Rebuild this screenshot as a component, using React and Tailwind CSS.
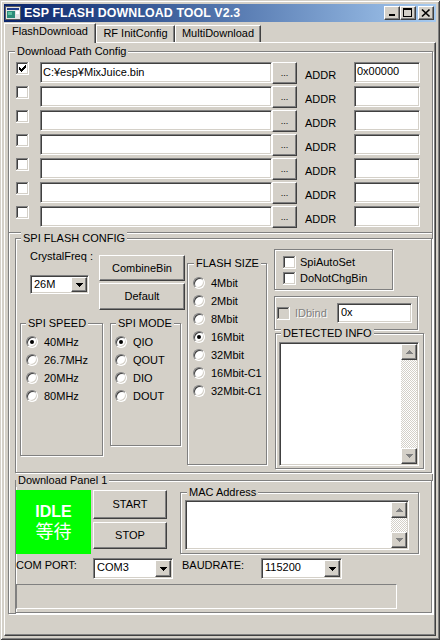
// Classic Win2000-style flash tool dialog, laid out at fixed pixel sizes.
const sunk =
  "border border-t-[#808080] border-l-[#808080] border-r-white border-b-white shadow-[inset_1px_1px_0_#404040,inset_-1px_-1px_0_#d4d0c8]";
const raised =
  "border border-t-white border-l-white border-r-[#404040] border-b-[#404040] shadow-[inset_-1px_-1px_0_#808080] bg-[#d4d0c8]";
const etched = "relative border border-[#808080] shadow-[inset_1px_1px_0_#fff,1px_1px_0_#fff]";

const checkCols = [
  [3, 5],
  [4, 6],
  [5, 7],
  [6, 6],
  [7, 5],
  [8, 4],
  [9, 3],
];

// 13px sunken check box, drawn pixel by pixel.
const CheckBox = ({ checked, disabled, className = "" }) => (
  <svg width="13" height="13" viewBox="0 0 13 13" className={`shrink-0 ${className}`}>
    <rect width="13" height="13" fill="#fff" />
    <path d="M0 0h12v1H1v11H0z" fill="#808080" />
    <path d="M1 1h10v1H2v9H1z" fill="#404040" />
    <path d="M11 1h1v11H1v-1h10z" fill="#d4d0c8" />
    <rect x="2" y="2" width="9" height="9" fill={disabled ? "#d4d0c8" : "#fff"} />
    {checked && checkCols.map(([x, y]) => <rect key={x} x={x} y={y} width="1" height="3" fill="#000" />)}
  </svg>
);

const Radio = ({ checked }) => (
  <span className={`flex h-[12px] w-[12px] shrink-0 items-center justify-center rounded-full bg-white ${sunk}`}>
    {checked ? <span className="h-[4px] w-[4px] rounded-full bg-black" /> : null}
  </span>
);

const Btn = ({ className = "", children }) => (
  <div className={`flex items-center justify-center leading-[13px] ${raised} ${className}`}>{children}</div>
);

// Group box with its caption sitting on the top line.
const Group = ({ label, className = "", pos = "left-[5px]", children }) => (
  <div className={`${etched} shrink-0 ${className}`}>
    {label ? (
      <span className={`absolute -top-[7px] ${pos} whitespace-nowrap bg-[#d4d0c8] px-[2px] leading-[13px]`}>{label}</span>
    ) : null}
    {children}
  </div>
);

const DownArrow = ({ color = "#000" }) => (
  <svg width="7" height="4" viewBox="0 0 7 4">
    <path d="M0 0h7v1H6v1H5v1H4v1H3V3H2V2H1V1H0z" fill={color} />
  </svg>
);

const UpArrow = ({ color = "#000" }) => (
  <svg width="7" height="4" viewBox="0 0 7 4">
    <path d="M3 0h1v1h1v1h1v1h1v1H0V3h1V2h1V1h1z" fill={color} />
  </svg>
);

const Combo = ({ value, className = "" }) => (
  <div className={`flex shrink-0 bg-white p-[1px] ${sunk} ${className}`}>
    <span className="flex-1 pl-[2px] pt-[1px] leading-[13px]">{value}</span>
    <div className={`flex w-[16px] items-center justify-center ${raised}`}>
      <DownArrow />
    </div>
  </div>
);

// Text area with a greyed-out vertical scroll bar.
const TextBox = ({ className = "" }) => (
  <div className={`flex justify-end bg-white p-[1px] ${sunk} ${className}`}>
    <div className="flex w-[16px] flex-col">
      <div className={`flex h-[16px] items-center justify-center ${raised}`}>
        <UpArrow color="#808080" />
      </div>
      <div className="flex-1 bg-[image:repeating-conic-gradient(#d4d0c8_0_25%,#ffffff_0_50%)] bg-[length:2px_2px]" />
      <div className={`flex h-[16px] items-center justify-center ${raised}`}>
        <DownArrow color="#808080" />
      </div>
    </div>
  </div>
);

const AppIcon = () => (
  <svg width="16" height="16" viewBox="0 0 16 16" className="ml-[1px] shrink-0">
    <rect x="0.5" y="1.5" width="15" height="13" fill="#e4e4e4" stroke="#5a5a5a" />
    <rect x="2" y="3" width="12" height="2" fill="#203c8c" />
    <rect x="2" y="6" width="8" height="7" fill="#2c8c78" />
    <rect x="3" y="7" width="4" height="3" fill="#5cc0a0" />
    <rect x="11" y="6" width="3" height="3" fill="#ffffff" />
  </svg>
);

const TitleBtn = ({ className = "", children }) => (
  <div className={`h-[14px] w-[16px] ${raised} ${className}`}>
    <svg width="14" height="12" viewBox="0 0 14 12">
      {children}
    </svg>
  </div>
);

const speeds = ["40MHz", "26.7MHz", "20MHz", "80MHz"];
const modes = ["QIO", "QOUT", "DIO", "DOUT"];
const sizes = ["4Mbit", "2Mbit", "8Mbit", "16Mbit", "32Mbit", "16Mbit-C1", "32Mbit-C1"];

const PathRow = ({ first }) => (
  <div className="flex h-[22px] items-start">
    <CheckBox checked={first} className="ml-[7px]" />
    <div className={`ml-[11px] h-[21px] w-[232px] bg-white pl-[2px] pt-[3px] leading-[13px] ${sunk}`}>
      {first ? "C:¥esp¥MixJuice.bin" : ""}
    </div>
    <Btn className="h-[22px] w-[25px] items-end pb-[3px] text-[9px] leading-[9px]">...</Btn>
    <span className="ml-[8px] mt-[7px] w-[49px] leading-[13px]">ADDR</span>
    <div className={`h-[21px] w-[66px] bg-white pl-[2px] pt-[2px] leading-[13px] ${sunk}`}>{first ? "0x00000" : ""}</div>
  </div>
);

export default function App() {
  return (
    <div className="h-[640px] w-[440px] bg-[#d4d0c8] p-[4px] font-['Liberation_Sans','Noto_Sans_CJK_JP',sans-serif] text-[11px] text-black shadow-[inset_1px_1px_0_#d4d0c8,inset_-1px_-1px_0_#404040,inset_2px_2px_0_#fff,inset_-2px_-2px_0_#808080]">
      {/* title bar */}
      <div className="flex h-[18px] items-center bg-linear-to-r from-[#0a246a] to-[#a6caf0]">
        <AppIcon />
        <span className="ml-[3px] text-[12.4px] font-bold tracking-[0.1px] text-white">ESP FLASH DOWNLOAD TOOL V2.3</span>
        <div className="ml-auto mr-[2px] flex items-center">
          <TitleBtn>
            <rect x="4" y="7" width="6" height="2" fill="#000" />
          </TitleBtn>
          <TitleBtn>
            <path d="M2 1h9v9H2zM3 3v6h7V3z" fill="#000" fillRule="evenodd" />
          </TitleBtn>
          <TitleBtn className="ml-[2px]">
            <path d="M3 2.5l7.5 7M10.5 2.5L3 9.5" stroke="#000" strokeWidth="1.7" />
          </TitleBtn>
        </div>
      </div>

      {/* tabs */}
      <div className="flex h-[20px] items-end">
        <div className="relative z-10 -mb-[1px] h-[20px] w-[92px] border-l border-r border-t border-l-white border-r-[#404040] border-t-white bg-[#d4d0c8] pt-[1px] text-center leading-[13px] shadow-[inset_-1px_0_0_#808080]">
          FlashDownload
        </div>
        <div className="h-[17px] w-[79px] border-l border-r border-t border-l-white border-r-[#404040] border-t-white pt-[1px] text-center leading-[13px] shadow-[inset_-1px_0_0_#808080]">
          RF InitConfig
        </div>
        <div className="h-[17px] w-[86px] border-l border-r border-t border-l-white border-r-[#404040] border-t-white pt-[1px] text-center leading-[13px] shadow-[inset_-1px_0_0_#808080]">
          MultiDownload
        </div>
      </div>

      {/* tab page */}
      <div className="flex h-[594px] flex-col border border-b-[#404040] border-l-white border-r-[#404040] border-t-white shadow-[inset_-1px_-1px_0_#808080]">
        <Group label="Download Path Config" pos="left-[6px]" className="ml-[3px] mt-[8px] h-[563px] w-[425px]">
          <div className="flex flex-col gap-[2px] pt-[10px]">
            {[0, 1, 2, 3, 4, 5, 6].map((i) => (
              <PathRow key={i} first={i === 0} />
            ))}
          </div>
          <div className="mt-[4px] h-[2px] border-b border-t border-b-white border-t-[#808080]" />

          {/* SPI flash config */}
          <Group label="SPI FLASH CONFIG" pos="left-[5px]" className="ml-[6px] mt-[4px] h-[235px] w-[417px]">
            <div className="flex items-start">
              <div className="ml-[4px] flex w-[165px] shrink-0 flex-col">
                <div className="mt-[11px] flex items-start">
                  <div className="ml-[10px] flex w-[59px] flex-col">
                    <span className="whitespace-nowrap leading-[13px]">CrystalFreq :</span>
                    <Combo value="26M" className="mt-[12px] h-[19px] w-[59px]" />
                  </div>
                  <div className="ml-[10px] mt-[5px] flex w-[86px] flex-col gap-[2px]">
                    <Btn className="h-[26px]">CombineBin</Btn>
                    <Btn className="h-[27px]">Default</Btn>
                  </div>
                </div>
                <div className="mt-[13px] flex items-start">
                  <Group label="SPI SPEED" pos="left-[5px]" className="h-[133px] w-[83px]">
                    <div className="flex flex-col gap-[6px] pt-[12px]">
                      {speeds.map((s, i) => (
                        <div key={s} className="flex h-[12px] items-center pl-[5px]">
                          <Radio checked={i === 0} />
                          <span className="ml-[6px] leading-[13px]">{s}</span>
                        </div>
                      ))}
                    </div>
                  </Group>
                  <Group label="SPI MODE" pos="left-[5px]" className="ml-[7px] h-[123px] w-[71px]">
                    <div className="flex flex-col gap-[6px] pt-[12px]">
                      {modes.map((s, i) => (
                        <div key={s} className="flex h-[12px] items-center pl-[4px]">
                          <Radio checked={i === 0} />
                          <span className="ml-[6px] leading-[13px]">{s}</span>
                        </div>
                      ))}
                    </div>
                  </Group>
                </div>
              </div>

              <Group label="FLASH SIZE" pos="left-[6px]" className="ml-[2px] mt-[24px] h-[202px] w-[80px]">
                <div className="flex flex-col gap-[6px] pt-[13px]">
                  {sizes.map((s, i) => (
                    <div key={s} className="flex h-[12px] items-center pl-[5px]">
                      <Radio checked={i === 3} />
                      <span className="ml-[6px] leading-[13px]">{s}</span>
                    </div>
                  ))}
                </div>
              </Group>

              <div className="ml-[7px] flex flex-col">
                <Group className="mt-[10px] h-[41px] w-[119px]">
                  <div className="flex flex-col gap-[3px] pl-[8px] pt-[6px]">
                    <div className="flex h-[13px] items-center">
                      <CheckBox />
                      <span className="ml-[4px] leading-[13px]">SpiAutoSet</span>
                    </div>
                    <div className="flex h-[13px] items-center">
                      <CheckBox />
                      <span className="ml-[4px] leading-[13px]">DoNotChgBin</span>
                    </div>
                  </div>
                </Group>
                <Group className="mt-[6px] flex h-[34px] w-[144px] items-center">
                  <CheckBox disabled className="ml-[2px]" />
                  <span className="ml-[5px] w-[36px] leading-[13px] text-[#808080] [text-shadow:1px_1px_0_#fff]">IDbind</span>
                  <div className={`ml-[6px] h-[20px] w-[75px] bg-white pl-[3px] pt-[2px] leading-[13px] ${sunk}`}>0x</div>
                </Group>
                <Group label="DETECTED INFO" pos="left-[5px]" className="ml-[1px] mt-[3px] h-[136px] w-[149px]">
                  <TextBox className="ml-[3px] mt-[8px] h-[124px] w-[140px]" />
                </Group>
              </div>
            </div>
          </Group>

          {/* download panel */}
          <Group label="Download Panel 1" pos="left-[0px]" className="ml-[6px] mt-[7px] h-[133px] w-[417px]">
            <div className="mt-[9px] flex items-start">
              <div className="flex h-[64px] w-[75px] shrink-0 flex-col items-center justify-center bg-[#00ff00] pt-[2px] text-white">
                <span className="text-[16px] font-bold leading-[18px]">IDLE</span>
                <span className="text-[18px] leading-[22px]">等待</span>
              </div>
              <div className="ml-[2px] flex w-[74px] shrink-0 flex-col gap-[3px]">
                <Btn className="h-[29px]">START</Btn>
                <Btn className="h-[27px]">STOP</Btn>
              </div>
              <Group label="MAC Address" pos="left-[6px]" className="ml-[13px] mt-[2px] h-[62px] w-[239px]">
                <TextBox className="ml-[4px] mt-[7px] h-[50px] w-[224px]" />
              </Group>
            </div>
            <div className="mt-[4px] flex items-start">
              <span className="mt-[1px] w-[77px] leading-[13px]">COM PORT:</span>
              <Combo value="COM3" className="h-[21px] w-[80px]" />
              <span className="ml-[9px] mt-[1px] w-[79px] leading-[13px]">BAUDRATE:</span>
              <Combo value="115200" className="h-[21px] w-[81px]" />
            </div>
            <div className="mt-[5px] h-[25px] w-[381px] border border-b-white border-l-[#808080] border-r-white border-t-[#808080]" />
          </Group>
        </Group>
      </div>
    </div>
  );
}
